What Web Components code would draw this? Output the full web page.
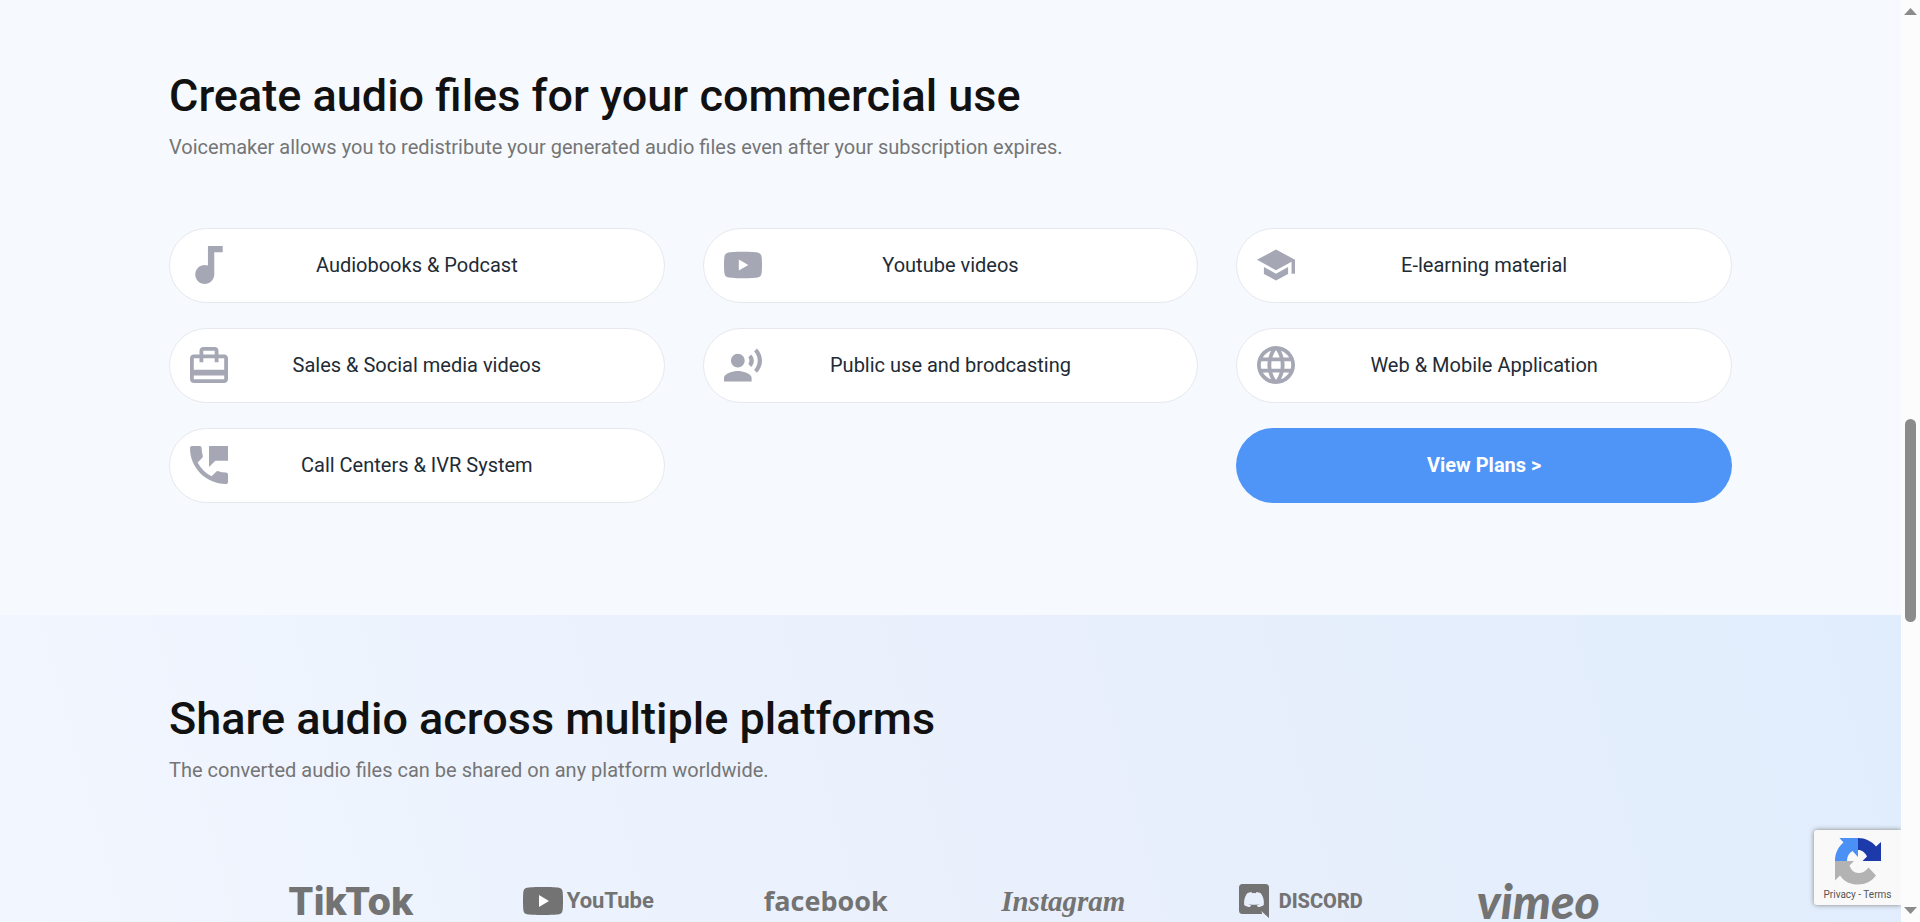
<!DOCTYPE html>
<html lang="en">
<head>
<meta charset="utf-8">
<meta name="viewport" content="width=device-width, initial-scale=1">
<title>Voicemaker</title>
<style>
  html, body {
    height: 100%;
    margin: 0;
  }
  body {
    font-family: Roboto, sans-serif;
    font-size: 20px;
    line-height: 30px;
    color: #212b36;
    --accent: #4f95f8;
    --icon: #a5a8b4;
    --logo: #737373;
  }
</style>
</head>
<body>
<vm-page>
  <vm-section heading="Create audio files for your commercial use"
    sub="Voicemaker allows you to redistribute your generated audio files even after your subscription expires.">
    <vm-grid>
      <vm-card icon="note">Audiobooks &amp; Podcast</vm-card>
      <vm-card icon="youtube">Youtube videos</vm-card>
      <vm-card icon="school">E-learning material</vm-card>
      <vm-card icon="travel">Sales &amp; Social media videos</vm-card>
      <vm-card icon="voice">Public use and brodcasting</vm-card>
      <vm-card icon="globe">Web &amp; Mobile Application</vm-card>
      <vm-card icon="phone">Call Centers &amp; IVR System</vm-card>
      <vm-cta href="#plans">View Plans &gt;</vm-cta>
    </vm-grid>
  </vm-section>
  <vm-section class="tint" heading="Share audio across multiple platforms"
    sub="The converted audio files can be shared on any platform worldwide.">
    <vm-logos>
      <vm-logo name="tiktok">TikTok</vm-logo>
      <vm-logo name="youtube">YouTube</vm-logo>
      <vm-logo name="facebook">facebook</vm-logo>
      <vm-logo name="instagram">Instagram</vm-logo>
      <vm-logo name="discord">DISCORD</vm-logo>
      <vm-logo name="vimeo">vimeo</vm-logo>
    </vm-logos>
  </vm-section>
  <vm-recaptcha slot="badge"></vm-recaptcha>
  <vm-scrollbar slot="scroll"></vm-scrollbar>
</vm-page>

<script>
// every icon has a tight viewBox, so all fill the same 38px slot
const icons = {
  note: ['6 3 13 18', 'M12 3v9.28c-.47-.17-.97-.28-1.5-.28C8.01 12 6 14.01 6 16.5S8.01 21 10.5 21c2.31 0 4.2-1.75 4.45-4H15V6h4V3h-7z'],
  youtube: ['2 5 20 14', 'M12 5c5 0 7 .2 8 .5 1.200.3 1.700 1.100 1.850 2.500.2 2.500.2 5.500 0 8-.15 1.400-.65 2.200-1.850 2.500-1 .3-3 .5-8 .5s-7-.2-8-.5c-1.200-.3-1.700-1.100-1.850-2.500-.2-2.500-.2-5.500 0-8 .15-1.400.65-2.200 1.850-2.500 1-.3 3-.5 8-.5zM9.800 9.100v5.800l5-2.900z'],
  school: ['1 3 22 18', 'M5 13.18v4L12 21l7-3.82v-4L12 17l-7-3.82zM12 3L1 9l11 6 9-4.91V17h2V9L12 3z'],
  travel: ['2 2 20 19', 'M20 6h-3V4c0-1.11-.89-2-2-2H9c-1.11 0-2 .89-2 2v2H4c-1.11 0-2 .89-2 2v11c0 1.11.89 2 2 2h16c1.11 0 2-.89 2-2V8c0-1.11-.89-2-2-2zM9 4h6v2H9V4zm11 15H4v-2h16v2zm0-5H4V8h3v2h2V8h6v2h2V8h3v6z'],
  voice: ['1 2 22 19', 'M9 5a4 4 0 1 0 0 8 4 4 0 0 0 0-8zM9 15c-2.67 0-8 1.34-8 4v2h16v-2c0-2.66-5.33-4-8-4zM16.760 5.360l-1.680 1.690c.84 1.180.84 2.710 0 3.890l1.680 1.690c2.020-2.020 2.020-5.070 0-7.270zM20.070 2l-1.630 1.630c2.770 3.020 2.770 7.560 0 10.740L20.070 16c3.900-3.890 3.910-9.950 0-14z'],
  globe: ['2 2 20 20', 'M11.99 2C6.47 2 2 6.48 2 12s4.47 10 9.99 10C17.52 22 22 17.52 22 12S17.52 2 11.99 2zm6.93 6h-2.95c-.32-1.25-.78-2.45-1.38-3.56 1.84.63 3.37 1.91 4.33 3.56zM12 4.04c.83 1.2 1.48 2.53 1.91 3.96h-3.82c.43-1.43 1.08-2.76 1.91-3.96zM4.26 14C4.1 13.36 4 12.69 4 12s.1-1.36.26-2h3.38c-.08.66-.14 1.32-.14 2s.06 1.34.14 2H4.26zm.82 2h2.95c.32 1.25.78 2.45 1.38 3.56-1.84-.63-3.37-1.9-4.33-3.56zm2.95-8H5.08c.96-1.66 2.49-2.93 4.33-3.56C8.81 5.55 8.35 6.75 8.03 8zM12 19.96c-.83-1.2-1.48-2.53-1.91-3.96h3.82c-.43 1.43-1.08 2.76-1.91 3.96zM14.34 14H9.66c-.09-.66-.16-1.32-.16-2s.07-1.35.16-2h4.68c.09.65.16 1.32.16 2s-.07 1.34-.16 2zm.25 5.56c.6-1.11 1.06-2.31 1.38-3.56h2.95c-.96 1.65-2.49 2.93-4.33 3.56zM16.36 14c.08-.66.14-1.32.14-2s-.06-1.34-.14-2h3.38c.16.64.26 1.31.26 2s-.1 1.36-.26 2h-3.38z'],
  phone: ['3 3 18 18', 'M20 15.5c-1.25 0-2.45-.2-3.57-.57-.35-.11-.74-.03-1.02.24l-2.2 2.2c-2.83-1.44-5.15-3.75-6.59-6.58l2.2-2.21c.28-.27.36-.66.25-1.01C8.7 6.45 8.5 5.25 8.5 4c0-.55-.45-1-1-1H4c-.55 0-1 .45-1 1 0 9.39 7.61 17 17 17 .55 0 1-.45 1-1v-3.5c0-.55-.45-1-1-1zM12 3v10l3-3h6V3h-9z'],
};

class VmPage extends HTMLElement {
  constructor() {
    super();
    this.attachShadow({ mode: 'open' }).innerHTML = `
      <style>
      :host {
        display: grid;
        grid-template-columns: 1fr 19px;
        height: 100vh;
        overflow: hidden;
      }
      main {
        position: relative;
        overflow: hidden;
      }
      </style>
      <main>
        <slot></slot>
        <slot name="badge"></slot>
      </main>
      <slot name="scroll"></slot>
    `;
  }
}

class VmSection extends HTMLElement {
  constructor() {
    super();
    this.attachShadow({ mode: 'open' }).innerHTML = `
      <style>
      :host {
        display: block;
        padding: 66px 169px 112px;
        background: #f6faff;
      }
      :host(.tint) {
        padding-top: 74px;
        background: linear-gradient(75deg, #f2f6ff 0%, #ebf2fd 38%, #e8effc 62%, #e0edfc 100%);
      }
      h2 {
        margin: 0 0 6px;
        font-size: 45px;
        font-weight: 500;
        line-height: 60px;
        color: #111;
      }
      p {
        margin: 0 0 66px;
        color: #757575;
      }
      </style>
      <h2>${this.getAttribute('heading')}</h2>
      <p>${this.getAttribute('sub')}</p>
      <slot></slot>
    `;
  }
}

class VmGrid extends HTMLElement {
  constructor() {
    super();
    this.attachShadow({ mode: 'open' }).innerHTML = `
      <style>
      :host {
        display: grid;
        grid-template-columns: repeat(3, 1fr);
        gap: 25px 38px;
      }
      </style>
      <slot></slot>
    `;
  }
}

class VmCard extends HTMLElement {
  constructor() {
    super();
    const [box, path] = icons[this.getAttribute('icon')];
    this.attachShadow({ mode: 'open' }).innerHTML = `
      <style>
      :host {
        display: grid;
        grid-template-columns: 38px 1fr 38px;
        align-items: center;
        box-sizing: border-box;
        height: 75px;
        padding: 0 20px 2px;
        border: 1px solid #e6e8ed;
        border-radius: 38px;
        background: #fff;
        text-align: center;
      }
      svg {
        width: 38px;
        height: 38px;
        fill: var(--icon);
      }
      </style>
      <svg viewBox="${box}" aria-hidden="true"><path fill-rule="evenodd" d="${path}"/></svg>
      <span><slot></slot></span>
    `;
  }
}

class VmCta extends HTMLElement {
  constructor() {
    super();
    this.attachShadow({ mode: 'open' }).innerHTML = `
      <style>
      :host {
        display: block;
        grid-column: 3;
      }
      a {
        display: flex;
        align-items: center;
        justify-content: center;
        box-sizing: border-box;
        height: 75px;
        padding-bottom: 2px;
        border-radius: 38px;
        background: var(--accent);
        color: #fff;
        font-weight: 700;
        text-decoration: none;
      }
      </style>
      <a href="${this.getAttribute('href')}"><slot></slot></a>
    `;
  }
}

class VmLogos extends HTMLElement {
  constructor() {
    super();
    this.attachShadow({ mode: 'open' }).innerHTML = `
      <style>
      :host {
        display: grid;
        grid-template-columns: repeat(6, 1fr);
        padding: 27px 75px 0 63px;
      }
      </style>
      <slot></slot>
    `;
  }
}

const marks = {
  youtube: `<svg width="40" height="28" viewBox="0 0 40 28"><path fill-rule="evenodd" d="M20 0c8 0 13 .2 16 .7 2.500.5 3.400 2 3.700 4.500.4 5 .4 12.600 0 17.600-.3 2.500-1.200 4-3.700 4.500-3 .5-8 .7-16 .7s-13-.2-16-.7c-2.500-.5-3.400-2-3.700-4.500-.4-5-.4-12.600 0-17.600C.6 2.700 1.500 1.200 4 .7 7 .2 12 0 20 0z"/><path fill="#fff" d="M16 8v12l10-6z"/></svg>`,
  discord: `<svg width="30" height="34" viewBox="0 0 30 34"><path fill-rule="evenodd" d="M3.500 0h23A3.500 3.500 0 0 1 30 3.500V34l-5-4.500L22.500 27l.7 3H3.500A3.500 3.500 0 0 1 0 26.500v-23A3.500 3.500 0 0 1 3.500 0zM8 9.500C5.500 13 4.800 17 5.200 21c2 1.500 4 2 5.800 2l1.200-1.800c-1.200-.3-2-.8-2.700-1.300 3.500 1.200 7.500 1.200 11 0-.7.6-1.500 1-2.700 1.300L19 23c1.800 0 3.800-.5 5.800-2 .4-4-.3-8-2.800-11.500-1.700-1-3.300-1.300-4.500-1.500l-.7 1.200c-1.200-.2-2.400-.2-3.600 0L12.500 8C11.300 8.200 9.700 8.500 8 9.500z"/></svg>`,
};

class VmLogo extends HTMLElement {
  constructor() {
    super();
    this.attachShadow({ mode: 'open' }).innerHTML = `
      <style>
      :host {
        display: flex;
        align-items: center;
        justify-content: center;
        gap: 4px;
        height: 46px;
        color: var(--logo);
        line-height: 46px;
        white-space: nowrap;
      }
      svg { fill: var(--logo); flex: none; }
      :host([name=tiktok]) { font: 800 38px/46px Inter, sans-serif; }
      :host([name=youtube]) { font: 700 22px/46px Roboto, sans-serif; }
      :host([name=facebook]) { font: 700 27px/46px "Open Sans", sans-serif; }
      :host([name=instagram]) { font: italic 700 29px/46px "Liberation Serif", serif; }
      :host([name=discord]) { gap: 10px; font: 800 20px/46px Roboto, sans-serif; }
      :host([name=vimeo]) { font: italic 900 48px/46px Lato, sans-serif; }
      </style>
      ${marks[this.getAttribute('name')] || ''}
      <span><slot></slot></span>
    `;
  }
}

class VmRecaptcha extends HTMLElement {
  constructor() {
    super();
    this.attachShadow({ mode: 'open' }).innerHTML = `
      <style>
      /* floats over the page in the bottom right corner */
      :host {
        position: absolute;
        right: 0;
        bottom: 17px;
        display: flex;
        flex-direction: column;
        align-items: center;
        box-sizing: border-box;
        width: 87px;
        height: 75px;
        padding-top: 8px;
        border-radius: 3px 0 0 3px;
        background: #f9f9f9;
        box-shadow: 0 0 5px #808080;
        color: #555;
        font-size: 10px;
        line-height: 20px;
      }
      svg {
        width: 46px;
        height: 47px;
        flex: none;
      }
      a {
        color: inherit;
        text-decoration: none;
      }
      </style>
      <svg viewBox="0 0 46 47" aria-hidden="true">
        <path fill="#1c3aa9" d="M23 0c7 0 13.500 3 18 8.500L46 4v19H27.500l4.500-4.500C30 14.500 27 12 23 12z"/>
        <path fill="#4a90f5" d="M23 0H4.500l4 4.500C3 9 0 15.500 0 23h12c0-4.500 2-8 5.500-10l5.500 6z"/>
        <path fill="#b3b3b3" d="M0 23h19l-4.500 4.500C16 32 19 35 23.500 35c4.500 0 7.500-2 10-5.500l7.500 8C36.500 43.500 30.500 46.500 23 46.500S9.500 44 5 37.500L0 42.500z"/>
      </svg>
      <span><a href="#privacy">Privacy</a> - <a href="#terms">Terms</a></span>
    `;
  }
}

class VmScrollbar extends HTMLElement {
  constructor() {
    super();
    this.attachShadow({ mode: 'open' }).innerHTML = `
      <style>
      :host {
        display: grid;
        grid-template-rows: 8px 7px 1fr 7px 8px;
        justify-items: center;
        background: #fcfcfc;
      }
      svg {
        width: 13px;
        height: 7px;
        fill: #8b8b8b;
      }
      .up { grid-row: 2; }
      .down { grid-row: 4; }
      .track {
        display: grid;
        grid-template-rows: 404fr 203fr 285fr;
        grid-row: 3;
      }
      .thumb {
        grid-row: 2;
        width: 11px;
        border-radius: 6px;
        background: #8b8b8b;
      }
      </style>
      <svg class="up" viewBox="0 0 13 7"><path d="M6.500 0L13 7H0z"/></svg>
      <div class="track"><div class="thumb"></div></div>
      <svg class="down" viewBox="0 0 13 7"><path d="M0 0h13L6.500 7z"/></svg>
    `;
  }
}

customElements.define('vm-page', VmPage);
customElements.define('vm-section', VmSection);
customElements.define('vm-grid', VmGrid);
customElements.define('vm-card', VmCard);
customElements.define('vm-cta', VmCta);
customElements.define('vm-logos', VmLogos);
customElements.define('vm-logo', VmLogo);
customElements.define('vm-recaptcha', VmRecaptcha);
customElements.define('vm-scrollbar', VmScrollbar);
</script>
</body>
</html>
